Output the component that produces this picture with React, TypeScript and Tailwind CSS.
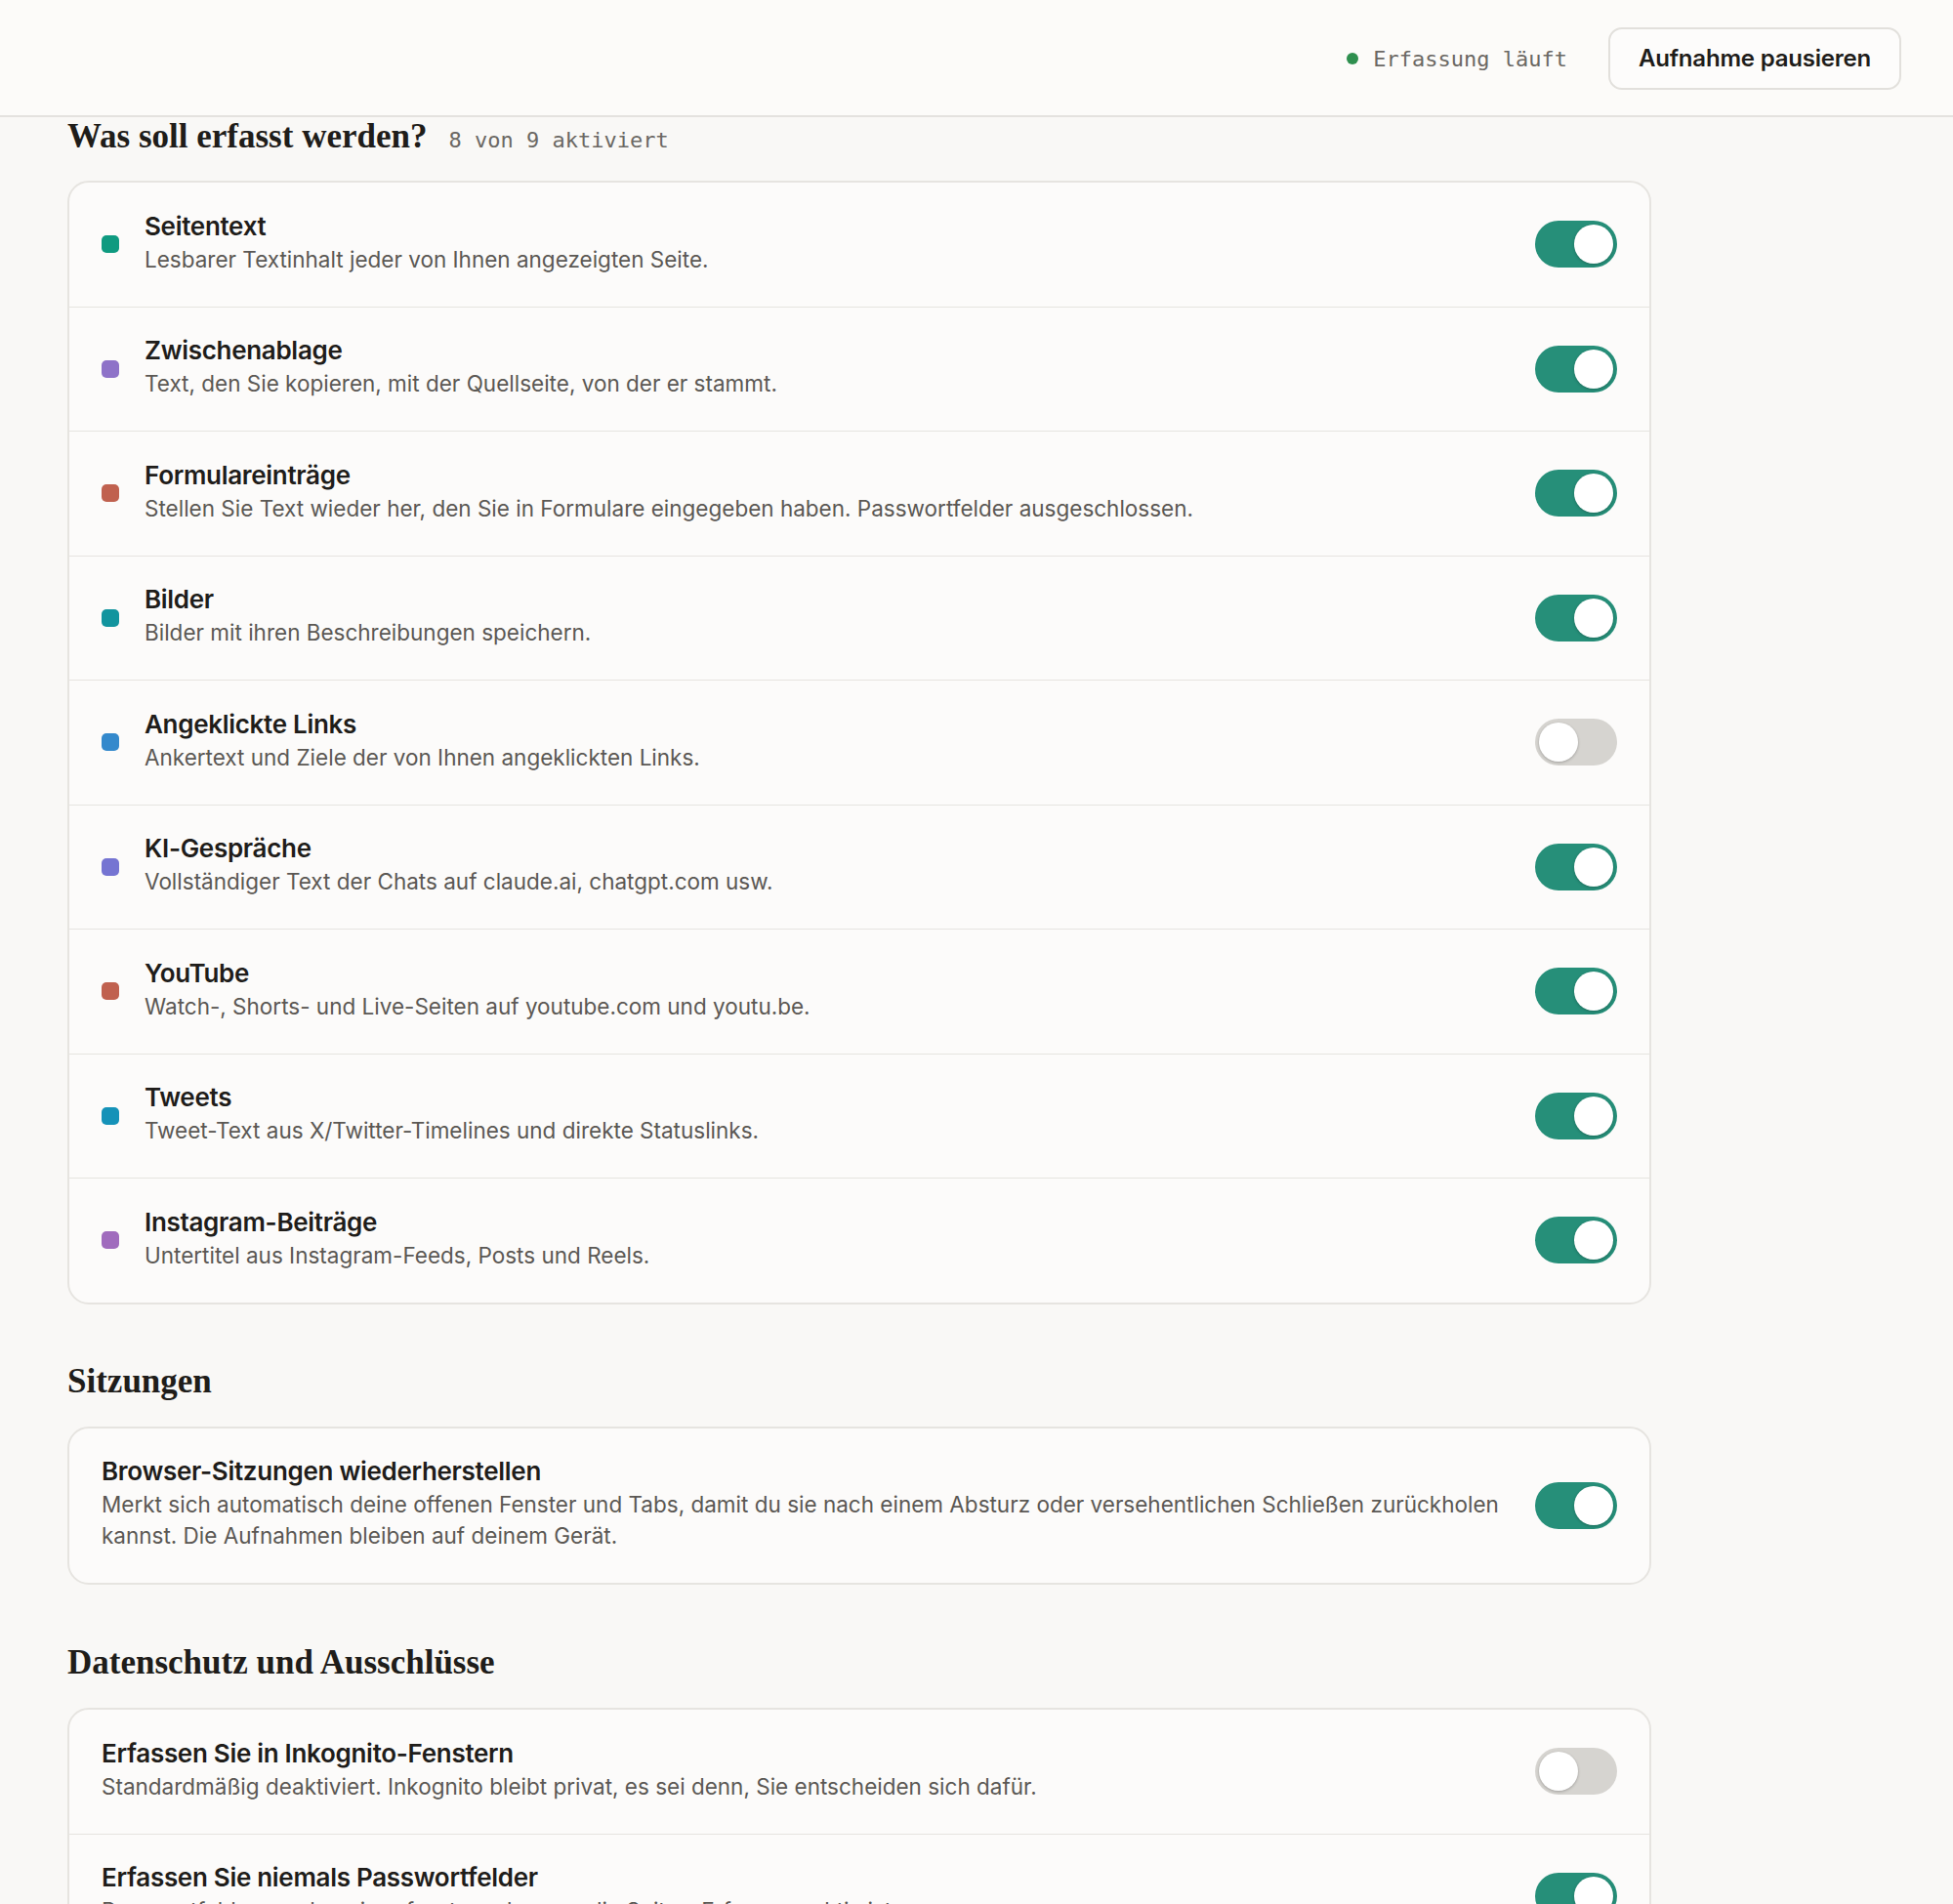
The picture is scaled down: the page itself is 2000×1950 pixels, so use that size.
import { useState } from "react";

type Source = { id: string; title: string; desc: string; dot: string; on: boolean };

const sources: Source[] = [
  { id: "page", title: "Seitentext", desc: "Lesbarer Textinhalt jeder von Ihnen angezeigten Seite.", dot: "bg-[#0f9a80]", on: true },
  { id: "clip", title: "Zwischenablage", desc: "Text, den Sie kopieren, mit der Quellseite, von der er stammt.", dot: "bg-[#8e72c8]", on: true },
  { id: "forms", title: "Formulareinträge", desc: "Stellen Sie Text wieder her, den Sie in Formulare eingegeben haben. Passwortfelder ausgeschlossen.", dot: "bg-[#c0614f]", on: true },
  { id: "img", title: "Bilder", desc: "Bilder mit ihren Beschreibungen speichern.", dot: "bg-[#12949e]", on: true },
  { id: "links", title: "Angeklickte Links", desc: "Ankertext und Ziele der von Ihnen angeklickten Links.", dot: "bg-[#3489cc]", on: false },
  { id: "ai", title: "KI-Gespräche", desc: "Vollständiger Text der Chats auf claude.ai, chatgpt.com usw.", dot: "bg-[#7574d2]", on: true },
  { id: "yt", title: "YouTube", desc: "Watch-, Shorts- und Live-Seiten auf youtube.com und youtu.be.", dot: "bg-[#c0614f]", on: true },
  { id: "tw", title: "Tweets", desc: "Tweet-Text aus X/Twitter-Timelines und direkte Statuslinks.", dot: "bg-[#1592b8]", on: true },
  { id: "ig", title: "Instagram-Beiträge", desc: "Untertitel aus Instagram-Feeds, Posts und Reels.", dot: "bg-[#a06bbd]", on: true },
];

function Toggle({ on, onChange }: { on: boolean; onChange: () => void }) {
  return (
    <button
      onClick={onChange}
      className={`relative flex h-[48px] w-[84px] shrink-0 items-center rounded-full p-[4px] transition-colors ${
        on ? "justify-end bg-[#268f79]" : "justify-start bg-[#d6d4d0]"
      }`}
    >
      <span className="block h-[40px] w-[40px] rounded-full bg-white shadow-[0_1px_3px_rgba(0,0,0,0.25)]" />
    </button>
  );
}

function Row({ title, desc, dot, on, onChange, last }: { title: string; desc: string; dot?: string; on: boolean; onChange: () => void; last?: boolean }) {
  return (
    <div
      className={`flex items-center px-[33px] py-[27.75px] ${dot ? "gap-[26px]" : "gap-[18px]"} ${
        last ? "" : "border-b border-[#e6e4e0]"
      }`}
    >
      {dot && <span className={`h-[18px] w-[18px] shrink-0 rounded-[5px] ${dot}`} />}
      <div className="min-w-0 flex-1 pb-[4px]">
        <div className="text-[26px] font-semibold leading-[34px] tracking-[-0.3px] text-[#1f1d1a]">{title}</div>
        <div className="mt-[1px] text-[22.5px] leading-[32px] text-[#5b5854]">{desc}</div>
      </div>
      <Toggle on={on} onChange={onChange} />
    </div>
  );
}

export default function App() {
  const [state, setState] = useState<Record<string, boolean>>(
    Object.fromEntries(sources.map((s) => [s.id, s.on]))
  );
  const [restore, setRestore] = useState(true);
  const [incognito, setIncognito] = useState(false);
  const [noPasswords, setNoPasswords] = useState(true);

  const active = Object.values(state).filter(Boolean).length;
  const flip = (id: string) => setState((s) => ({ ...s, [id]: !s[id] }));

  return (
    <div className="min-h-[1950px] bg-[#f9f8f6] font-['Inter',sans-serif] text-[#1f1d1a]">
      {/* Top bar */}
      <header className="flex h-[120px] items-center justify-end gap-[42px] border-b-2 border-[#e4e2df] bg-[#fcfbf9] pr-[53px]">
        <div className="flex items-center gap-[15px] pt-[2px]">
          <span className="h-[12px] w-[12px] rounded-full bg-[#2e8f4f]" />
          <span className="font-['DejaVu_Sans_Mono',monospace] text-[22px] text-[#6b6864]">Erfassung läuft</span>
        </div>
        <button className="mt-[2px] h-[64px] w-[300px] rounded-[14px] border-2 border-[#e2e0dc] bg-[#fdfcfb] text-[24px] font-semibold tracking-[-0.2px] text-[#1f1d1a]">
          Aufnahme pausieren
        </button>
      </header>

      <main className="w-[1691px] pl-[69px]">
        <div className="flex items-baseline gap-[22px]">
          <h2 className="font-['Liberation_Serif',serif] text-[35px] font-bold leading-[40px]">Was soll erfasst werden?</h2>
          <span className="font-['DejaVu_Sans_Mono',monospace] text-[22px] text-[#6b6864]">
            {active} von {sources.length} aktiviert
          </span>
        </div>

        <div className="mt-[25px] overflow-hidden rounded-[22px] border-2 border-[#e6e4e0] bg-[#fcfbfa]">
          {sources.map((s, i) => (
            <Row
              key={s.id}
              title={s.title}
              desc={s.desc}
              dot={s.dot}
              on={state[s.id]}
              onChange={() => flip(s.id)}
              last={i === sources.length - 1}
            />
          ))}
        </div>

        <h2 className="mt-[59px] font-['Liberation_Serif',serif] text-[35px] font-bold leading-[40px]">Sitzungen</h2>
        <div className="mt-[26px] overflow-hidden rounded-[22px] border-2 border-[#e6e4e0] bg-[#fcfbfa]">
          <Row
            title="Browser-Sitzungen wiederherstellen"
            desc="Merkt sich automatisch deine offenen Fenster und Tabs, damit du sie nach einem Absturz oder versehentlichen Schließen zurückholen kannst. Die Aufnahmen bleiben auf deinem Gerät."
            on={restore}
            onChange={() => setRestore(!restore)}
            last
          />
        </div>

        <h2 className="mt-[60px] font-['Liberation_Serif',serif] text-[35px] font-bold leading-[40px]">Datenschutz und Ausschlüsse</h2>
        <div className="mt-[26px] overflow-hidden rounded-[22px] border-2 border-[#e6e4e0] bg-[#fcfbfa]">
          <Row
            title="Erfassen Sie in Inkognito-Fenstern"
            desc="Standardmäßig deaktiviert. Inkognito bleibt privat, es sei denn, Sie entscheiden sich dafür."
            on={incognito}
            onChange={() => setIncognito(!incognito)}
          />
          <Row
            title="Erfassen Sie niemals Passwortfelder"
            desc="Passwortfelder werden nie erfasst, auch wenn die Seiten-Erfassung aktiv ist."
            on={noPasswords}
            onChange={() => setNoPasswords(!noPasswords)}
            last
          />
        </div>
      </main>
    </div>
  );
}
